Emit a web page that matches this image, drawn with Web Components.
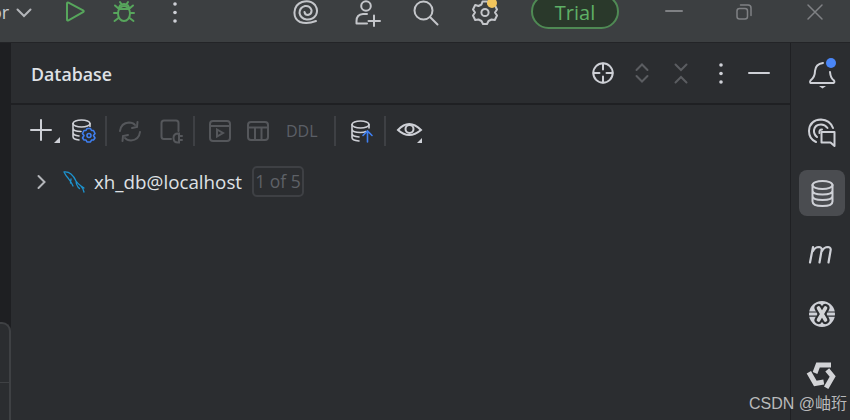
<!DOCTYPE html>
<html>
<head>
<meta charset="utf-8">
<style>
  html, body { margin: 0; height: 100%; background: #2b2d30; overflow: hidden; }
</style>
</head>
<body>
<ide-window>
  <top-bar slot="top"></top-bar>
  <left-strip slot="left"></left-strip>
  <db-panel slot="main">
    <panel-header></panel-header>
    <db-toolbar></db-toolbar>
    <tree-row label="xh_db@localhost" badge="1 of 5"></tree-row>
  </db-panel>
  <side-rail slot="right"></side-rail>
</ide-window>
<water-mark>CSDN @岫珩</water-mark>

<script>
const html = String.raw;

// all icons are drawn at pixel scale, box size comes from w/h attributes
const BLADE = "M8 13 L11 5 H24";
const blade = (deg) => `<g transform="rotate(${deg} 15 15)"><path d="${BLADE}" style="stroke:#2b2d30;stroke-width:6.6;stroke-linecap:butt"/><path d="${BLADE}" style="stroke:#d2d3d6;stroke-width:5;stroke-linecap:butt"/></g>`;
const ICONS = {
  chevronDown: `<path d="M1.5 1.5 L8 8 L14.5 1.5" />`,
  play: `<path d="M2 2.5 Q2 1 3.5 1.7 L18 9.3 Q19.5 10.2 18 11.2 L3.5 19.3 Q2 20 2 18.5 Z" />`,
  bug: `<ellipse cx="11" cy="12.5" rx="6" ry="7.5"/><path d="M6 8 Q6 3 11 3 Q16 3 16 8 M6 8 H16 M7 1 L9 4 M15 1 L13 4 M5 12 H1 M17 12 H21 M5.5 17 L1.5 20 M16.5 17 L20.5 20 M5.5 7.5 L2 4.5 M16.5 7.5 L20 4.5"/>`,
  dots: `<circle cx="3" cy="3" r="1.8" class="f"/><circle cx="3" cy="11.5" r="1.8" class="f"/><circle cx="3" cy="20" r="1.8" class="f"/>`,
  spiral: `<path d="M23 21 Q14 24.5 7 22 Q1 19 1.5 12 Q2 4.5 9 2 Q17 -0.5 22 5 Q25.5 10 23 15 Q20 20 13.5 19.5 Q7.5 18.5 6.5 13 Q6.5 7.5 12 6 Q17 5.5 18.5 10 Q19 14 15 15 Q12 15 11.5 12"/>`,
  user: `<circle cx="11" cy="6" r="4.8"/><path d="M1.5 23.5 V21 Q1.5 14.5 8 14 H12 M2 23.5 H12 M19 15.5 V26 M13.5 21 H25"/>`,
  search: `<circle cx="10.5" cy="10.5" r="9"/><path d="M17 17 L24.5 24.5"/>`,
  gear: `<path d="M10.5 1.5 L15.5 1.5 L16.5 4.5 L19.5 6 L22.8 5 L25 9.5 L23 12.5 L25 15.5 L22.8 20 L19.5 19.5 L16.5 21 L15 24 L11 24 L9.5 21 L6.5 19.5 L3.2 20 L1 15.5 L3 12.5 L1 9.5 L3.2 5 L6.5 6 L9.5 4.5 Z" stroke-linejoin="round"/><circle cx="13" cy="12.5" r="3.6"/>`,
  minus: `<path d="M0 1 H16" />`,
  restore: `<rect x="1" y="4.5" width="10.5" height="10.5" rx="2.5"/><path d="M4.5 1 H12 Q15 1 15 4 V11.5"/>`,
  close: `<path d="M1 1 L15 15 M15 1 L1 15" />`,
  target: `<circle cx="11" cy="11" r="9.7"/><path d="M11 1.5 V7.5 M11 14.5 V20.5 M1.5 11 H7.5 M14.5 11 H20.5"/>`,
  expand: `<path d="M1.5 7 L7 1.5 L12.5 7 M1.5 13 L7 18.5 L12.5 13"/>`,
  collapse: `<path d="M1.5 1.5 L7 7 L12.5 1.5 M1.5 19.5 L7 14 L12.5 19.5"/>`,
  dash: `<path d="M0 1 H20"/>`,
  bell: `<path d="M1.5 23 Q0.5 22 1.5 20.5 Q6 17 6 11 Q6.5 4 14 3 M1.5 23 H24.5 Q26 22.5 25 20.5 Q21.5 18 21 12"/><path d="M10 26 H17 L13.5 28.5 Z" class="f"/>`,
  chat: `<path d="M8 24 Q1 21 1 13 Q1.5 2 13 1.5 Q22 2 25 10 M9 19 Q5.5 16 6 12 Q7 6.5 13 6.5 Q17 6.5 19.5 10 M11.5 15 Q11 11.5 14 11.5" /><path d="M13.5 14 H26.5 V28 L22.5 24.5 H13.5 Z" stroke-linejoin="round"/>`,
  dbLarge: `<ellipse cx="11.5" cy="5" rx="10" ry="4"/><path d="M1.5 5 V21.5 Q1.5 26 11.5 26 Q21.5 26 21.5 21.5 V5 M1.5 10.5 Q1.5 14.5 11.5 14.5 Q21.5 14.5 21.5 10.5 M1.5 16 Q1.5 20 11.5 20 Q21.5 20 21.5 16"/>`,
  m: `<path d="M4 2 L1 17.5 M4 6 Q6 2 10 2 Q13.5 2.5 12.5 6 L10.5 17.5 M13 6 Q15 2 19 2 Q22.5 2.5 21.5 6 L19.5 17.5" stroke-width="2.2"/>`,
  xball: `<circle cx="13" cy="13" r="13" class="f"/><path d="M0 11 H7 M0 15.2 H7 M19 11 H26 M19 15.2 H26" style="stroke:#2b2d30" stroke-width="1.2"/><path d="M9.5 7 L16.5 19 M16.5 7 L9.5 19" style="stroke:#2b2d30" stroke-width="8"/><path d="M9.5 7 L16.5 19 M16.5 7 L9.5 19" style="stroke:#d2d3d6" stroke-width="3.6"/>`,
  tongyi: blade(0) + blade(120) + blade(240),
  plus: `<path d="M0 10 H20 M10 0 V20"/><path d="M29 17 V23 H23 Z" class="f"/>`,
  dbGear: `<ellipse cx="9.5" cy="4.5" rx="8.5" ry="3.5"/><path d="M1 4.5 V17.5 Q1 20.5 7 21 M18 4.5 V7.5 M1 9 Q1 12.5 9 12.5 M1 13.5 Q1 16.5 7 17"/><path class="blue" d="M15 9.5 L18.5 9.5 L19.5 11.5 L21.5 11.5 L23 14.5 L21.5 16.5 L23 19 L21.5 21 L19.5 21 L18.5 23 L15 23 L14 21 L12 21 L10.5 19 L12 16.5 L10.5 14.5 L12 11.5 L14 11.5 Z" stroke-linejoin="round"/><circle class="blue" cx="17" cy="16.5" r="2"/>`,
  refresh: `<path d="M2 11 Q3 3 11 2.5 Q15 2.5 17 5 M22 12 Q21 20 13 20.5 Q9 20.5 7 18 M14 8 L19 7 L19.5 2 M10 15 L5 16 L4.5 21"/>`,
  plug: `<path d="M11 20 H4 Q1.5 20 1.5 17.5 V4 Q1.5 1.5 4 1.5 H16 Q18.5 1.5 18.5 4 V12 M13.5 19 Q13.5 14.5 18 14.5 H19 V23.5 H18 Q13.5 23.5 13.5 19 Z M19 17 H22 M19 21 H22"/>`,
  console: `<rect x="1" y="1" width="20" height="20" rx="3"/><path d="M1 6 H21 M8 9.5 L14 13 L8 16.5 Z"/>`,
  table: `<rect x="1" y="1" width="20" height="18" rx="3"/><path d="M1 6.5 H21 M8 6.5 V19 M14.5 6.5 V19"/>`,
  dbUp: `<ellipse cx="9.5" cy="4.5" rx="8.5" ry="3.5"/><path d="M1 4.5 V17.5 Q1 20.5 8 21 M18 4.5 V8 M1 9 Q1 12.5 9.5 12.5 Q13 12.5 15 11.5 M1 13.5 Q1 16.5 8 17"/><path class="blue" d="M16.5 22 V11 M12 15.5 L16.5 11 L21 15.5"/>`,
  eye: `<path d="M1 11 Q12 -1 24 11 Q12 21 1 11 Z"/><circle cx="12.5" cy="10" r="4"/><path d="M25 19 V24 H20 Z" class="f"/>`,
  chevronRight: `<path d="M1.5 1 L7.5 7 L1.5 13"/>`,
  mysql: `<path d="M1 1 Q5 0.5 8 3 Q11 5.5 13 10 Q15 13 18 15 L21 17 M1 1 Q3 5 5 7 L8.5 12 L10 15 M8 8 L7.5 12 M13 10 Q13 13 15 16 L16.5 17.5 M18 15 Q20 17 21 21"/>`
};

class IdeIcon extends HTMLElement {
  connectedCallback() {
    const w = this.getAttribute("w") || 24;
    const h = this.getAttribute("h") || 24;
    const color = this.getAttribute("color") || "#ced0d6";
    const sw = this.getAttribute("sw") || 2;
    const root = this.shadowRoot || this.attachShadow({ mode: "open" });
    root.innerHTML = html`
      <style>
        :host { display: block; width: ${w}px; height: ${h}px; flex: none; }
        svg { display: block; overflow: visible; fill: none; stroke: ${color}; stroke-width: ${sw}; stroke-linecap: round; }
        .f { fill: ${color}; stroke: none; }
        .blue { stroke: #3f7ff0; }
      </style>
      <svg width="${w}" height="${h}" viewBox="0 0 ${w} ${h}">${ICONS[this.getAttribute("name")]}</svg>
    `;
  }
}
customElements.define("ide-icon", IdeIcon);

const windowTpl = document.createElement("template");
windowTpl.innerHTML = html`
  <style>
    :host { display: grid; width: 850px; height: 420px; overflow: hidden;
      grid-template: 43px 1fr / 11px 1fr 59px;
      font-family: "Open Sans", "Liberation Sans", sans-serif; }
    ::slotted([slot="top"]) { grid-column: 1 / 4; }
  </style>
  <slot name="top"></slot>
  <slot name="left"></slot>
  <slot name="main"></slot>
  <slot name="right"></slot>
`;
class IdeWindow extends HTMLElement {
  constructor() {
    super();
    this.attachShadow({ mode: "open" }).appendChild(windowTpl.content.cloneNode(true));
  }
}
customElements.define("ide-window", IdeWindow);

const topTpl = document.createElement("template");
topTpl.innerHTML = html`
  <style>
    :host { display: flex; height: 42px; background: #3c3f41; border-bottom: 1px solid #232427;
      overflow: hidden; box-sizing: content-box; }
    .row { display: flex; align-items: flex-start; height: 42px; }
    .or { font: 18px/24px "Open Sans", sans-serif; color: #c9ccd2; margin-left: -9px; width: 25px; flex: none; }
    .pill { box-sizing: border-box; width: 88px; height: 35px; margin: -6px 0 0 0; flex: none;
      border: 2px solid #4f8a54; border-radius: 18px; background: #2a392b; color: #5fb066;
      font: 20px/34px "Open Sans", sans-serif; text-align: center; }
    .gear { position: relative; }
    .gear i { position: absolute; left: 15px; top: -2px; width: 10px; height: 10px; border-radius: 50%; background: #f2c55c; }
  </style>
  <div class="row">
    <span class="or">or</span>
    <ide-icon name="chevronDown" w="16" h="10" color="#b4b6ba" style="margin-top:8px"></ide-icon>
    <ide-icon name="play" w="21" h="21" color="#57a65c" style="margin:1px 0 0 33px"></ide-icon>
    <ide-icon name="bug" w="22" h="22" color="#57a65c" style="margin:1px 0 0 27px"></ide-icon>
    <ide-icon name="dots" w="6" h="23" style="margin:1px 0 0 37px"></ide-icon>
    <ide-icon name="spiral" w="25" h="25" color="#c4c6ca" style="margin:0 0 0 115px"></ide-icon>
    <ide-icon name="user" w="26" h="26" color="#c4c6ca" style="margin:0 0 0 37px"></ide-icon>
    <ide-icon name="search" w="25" h="25" color="#c4c6ca" style="margin:0 0 0 32px"></ide-icon>
    <div class="gear" style="margin-left:34px">
      <ide-icon name="gear" w="26" h="25" color="#c4c6ca"></ide-icon>
      <i></i>
    </div>
    <div class="pill" style="margin-left:33px">Trial</div>
    <ide-icon name="minus" w="16" h="2" color="#7f8184" style="margin:10px 0 0 47px"></ide-icon>
    <ide-icon name="restore" w="16" h="16" color="#7f8184" sw="1.5" style="margin:4px 0 0 54px"></ide-icon>
    <ide-icon name="close" w="16" h="16" color="#7f8184" sw="1.5" style="margin:4px 0 0 55px"></ide-icon>
  </div>
`;
class TopBar extends HTMLElement {
  constructor() {
    super();
    this.attachShadow({ mode: "open" }).appendChild(topTpl.content.cloneNode(true));
  }
}
customElements.define("top-bar", TopBar);

const leftTpl = document.createElement("template");
leftTpl.innerHTML = html`
  <style>
    :host { display: flex; flex-direction: column; background: #1e1f22; }
    .gap { flex: none; height: 279px; }
    .card { flex: 1; border: solid #3f4144; border-width: 2px 2px 0 0; border-top-right-radius: 9px;
      background: #2b2d30; margin-left: -2px; display: flex; flex-direction: column; }
    .card div { height: 58px; border-bottom: 1px solid #3f4144; flex: none; }
  </style>
  <div class="gap"></div>
  <div class="card"><div></div></div>
`;
class LeftStrip extends HTMLElement {
  constructor() {
    super();
    this.attachShadow({ mode: "open" }).appendChild(leftTpl.content.cloneNode(true));
  }
}
customElements.define("left-strip", LeftStrip);

const panelTpl = document.createElement("template");
panelTpl.innerHTML = html`
  <style>
    :host { display: block; background: #2b2d30; border-right: 1px solid #1f2023; }
  </style>
  <slot></slot>
`;
class DbPanel extends HTMLElement {
  constructor() {
    super();
    this.attachShadow({ mode: "open" }).appendChild(panelTpl.content.cloneNode(true));
  }
}
customElements.define("db-panel", DbPanel);

const headerTpl = document.createElement("template");
headerTpl.innerHTML = html`
  <style>
    :host { display: flex; align-items: center; height: 60px; box-sizing: content-box;
      border-bottom: 2px solid #1f2023; padding-left: 20px; }
    h1 { margin: 0; flex: 1; font: 600 17.8px/26px "Open Sans", sans-serif; color: #dfe1e5; padding-top: 2px; }
    .acts { display: flex; align-items: center; }
  </style>
  <h1>Database</h1>
  <div class="acts">
    <ide-icon name="target" w="22" h="22"></ide-icon>
    <ide-icon name="expand" w="14" h="20" color="#5b5d61" style="margin-left:21px"></ide-icon>
    <ide-icon name="collapse" w="14" h="21" color="#5b5d61" style="margin-left:25px"></ide-icon>
    <ide-icon name="dots" w="6" h="23" style="margin-left:30px"></ide-icon>
    <ide-icon name="dash" w="20" h="2" style="margin:0 21px 0 25px"></ide-icon>
  </div>
`;
class PanelHeader extends HTMLElement {
  constructor() {
    super();
    this.attachShadow({ mode: "open" }).appendChild(headerTpl.content.cloneNode(true));
  }
}
customElements.define("panel-header", PanelHeader);

const toolbarTpl = document.createElement("template");
toolbarTpl.innerHTML = html`
  <style>
    :host { display: flex; align-items: center; height: 52px; padding-left: 20px; }
    .sep { width: 2px; height: 30px; background: #3e4044; flex: none; }
    .ddl { font: 16px "Open Sans", sans-serif; color: #5b5f66; width: 34px; flex: none; }
  </style>
  <ide-icon name="plus" w="29" h="23"></ide-icon>
  <ide-icon name="dbGear" w="23" h="24" style="margin-left:12px" sw="1.6"></ide-icon>
  <div class="sep" style="margin-left:10px"></div>
  <ide-icon name="refresh" w="23" h="23" color="#55575b" style="margin-left:11px"></ide-icon>
  <ide-icon name="plug" w="22" h="24" color="#55575b" style="margin-left:19px"></ide-icon>
  <div class="sep" style="margin-left:11px"></div>
  <ide-icon name="console" w="22" h="22" color="#55575b" style="margin-left:14px"></ide-icon>
  <ide-icon name="table" w="22" h="20" color="#55575b" style="margin-left:16px"></ide-icon>
  <span class="ddl" style="margin-left:17px">DDL</span>
  <div class="sep" style="margin-left:14px"></div>
  <ide-icon name="dbUp" w="22" h="23" style="margin-left:15px" sw="1.6"></ide-icon>
  <div class="sep" style="margin-left:11px"></div>
  <ide-icon name="eye" w="26" h="24" style="margin-left:11px"></ide-icon>
`;
class DbToolbar extends HTMLElement {
  constructor() {
    super();
    this.attachShadow({ mode: "open" }).appendChild(toolbarTpl.content.cloneNode(true));
  }
}
customElements.define("db-toolbar", DbToolbar);

const treeTpl = document.createElement("template");
treeTpl.innerHTML = html`
  <style>
    :host { display: flex; align-items: center; height: 31px; margin-top: 9px; padding-left: 26px; }
    .label { font: 18.8px "Open Sans", sans-serif; color: #dfe1e5; margin-left: 8px; white-space: nowrap; width: 148px; flex: none; }
    .badge { box-sizing: border-box; height: 31px; width: 52px; margin-left: 10px; flex: none;
      border: 2px solid #3e4044; border-radius: 5px; color: #5e6167; text-align: center;
      font: 17.5px/27px "Open Sans", sans-serif; white-space: nowrap; }
  </style>
  <ide-icon name="chevronRight" w="9" h="14" color="#b4b6ba"></ide-icon>
  <ide-icon name="mysql" w="23" h="22" color="#1d93cf" style="margin-left:17px" sw="1.3"></ide-icon>
  <span class="label"></span>
  <span class="badge"></span>
`;
class TreeRow extends HTMLElement {
  constructor() {
    super();
    this.attachShadow({ mode: "open" }).appendChild(treeTpl.content.cloneNode(true));
  }
  connectedCallback() {
    this.shadowRoot.querySelector(".label").textContent = this.getAttribute("label");
    this.shadowRoot.querySelector(".badge").textContent = this.getAttribute("badge");
  }
}
customElements.define("tree-row", TreeRow);

const railTpl = document.createElement("template");
railTpl.innerHTML = html`
  <style>
    :host { display: flex; flex-direction: column; align-items: center; background: #2b2d30; padding-left: 3px; overflow: hidden; }
    .bell { position: relative; margin-top: 17px; }
    .bell i { position: absolute; left: 17px; top: -2px; width: 10px; height: 10px; border-radius: 50%; background: #4a86f7; }
    .active { width: 46px; height: 46px; border-radius: 8px; background: #4a4c50; display: flex;
      align-items: center; justify-content: center; margin-top: 24px; flex: none; }
  </style>
  <div class="bell">
    <ide-icon name="bell" w="27" h="29"></ide-icon>
    <i></i>
  </div>
  <ide-icon name="chat" w="28" h="28" style="margin-top:29px"></ide-icon>
  <div class="active"><ide-icon name="dbLarge" w="23" h="27"></ide-icon></div>
  <ide-icon name="m" w="27" h="19" style="margin-top:29px"></ide-icon>
  <ide-icon name="xball" w="26" h="26" style="margin-top:37px"></ide-icon>
  <ide-icon name="tongyi" w="30" h="30" style="margin-top:33px"></ide-icon>
`;
class SideRail extends HTMLElement {
  constructor() {
    super();
    this.attachShadow({ mode: "open" }).appendChild(railTpl.content.cloneNode(true));
  }
}
customElements.define("side-rail", SideRail);

const markTpl = document.createElement("template");
markTpl.innerHTML = html`
  <style>
    :host { position: absolute; right: 3px; bottom: 6px; color: #b9babb; white-space: nowrap;
      font: 16px "Liberation Sans", "Noto Sans CJK SC", sans-serif; }
  </style>
  <slot></slot>
`;
class WaterMark extends HTMLElement {
  constructor() {
    super();
    this.attachShadow({ mode: "open" }).appendChild(markTpl.content.cloneNode(true));
  }
}
customElements.define("water-mark", WaterMark);
</script>
</body>
</html>
